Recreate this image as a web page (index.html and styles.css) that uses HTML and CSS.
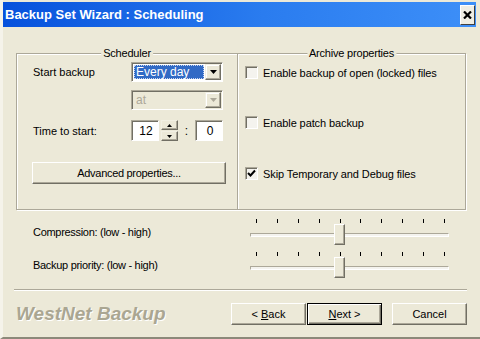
FILE: index.html
```html
<!DOCTYPE html>
<html lang="en">
<head>
    <meta charset="UTF-8">
    <title>Backup Set Wizard : Scheduling</title>
    <link rel="stylesheet" href="styles.css">
</head>
<body>
    <div class="window">
        <div class="titlebar">
            <span class="title">Backup Set Wizard : Scheduling</span>
            <span class="close">
                <svg width="9" height="8" viewBox="0 0 9 8"><path d="M1 0.5 L8 7.5 M8 0.5 L1 7.5" stroke="#000" stroke-width="2.2"/></svg>
            </span>
        </div>

        <div class="groups">
            <div class="group scheduler">
                <span class="legend">Scheduler</span>

                <div class="form-row">
                    <span class="label">Start backup</span>
                    <div class="combo">
                        <span class="combo-text selected">Every day</span>
                        <span class="combo-btn">
                            <svg width="7" height="4" viewBox="0 0 7 4"><path d="M0 0 H7 L3.5 4 Z" fill="#000"/></svg>
                        </span>
                    </div>
                </div>

                <div class="form-row second">
                    <span class="label"></span>
                    <div class="combo disabled">
                        <span class="combo-text">at</span>
                        <span class="combo-btn">
                            <svg width="7" height="4" viewBox="0 0 7 4"><path d="M0 0 H7 L3.5 4 Z" fill="#aca899"/></svg>
                        </span>
                    </div>
                </div>

                <div class="form-row time-row">
                    <span class="label">Time to start:</span>
                    <div class="time">
                        <span class="field">12</span>
                        <span class="spin">
                            <span class="spin-btn"><svg width="5" height="3" viewBox="0 0 5 3"><path d="M0 3 H5 L2.5 0 Z" fill="#000"/></svg></span>
                            <span class="spin-btn"><svg width="5" height="3" viewBox="0 0 5 3"><path d="M0 0 H5 L2.5 3 Z" fill="#000"/></svg></span>
                        </span>
                        <span class="colon">:</span>
                        <span class="field">0</span>
                    </div>
                </div>

                <button class="btn advanced">Advanced properties...</button>
            </div>

            <div class="group archive">
                <span class="legend">Archive properties</span>
                <div class="check">
                    <span class="box"></span>
                    <span>Enable backup of open (locked) files</span>
                </div>
                <div class="check">
                    <span class="box"></span>
                    <span>Enable patch backup</span>
                </div>
                <div class="check">
                    <span class="box">
                        <svg width="9" height="9" viewBox="0 0 9 9"><path d="M1 4 L3.5 6.5 L8 1.5" stroke="#000" stroke-width="2" fill="none"/></svg>
                    </span>
                    <span>Skip Temporary and Debug files</span>
                </div>
            </div>
        </div>

        <div class="slider-row first">
            <span class="slider-label">Compression: (low - high)</span>
            <div class="slider">
                <div class="ticks">
                    <i></i><i></i><i></i><i></i><i></i><i></i><i></i><i></i><i></i><i></i>
                </div>
                <div class="track"></div>
                <span class="thumb"></span>
            </div>
        </div>

        <div class="slider-row">
            <span class="slider-label">Backup priority: (low - high)</span>
            <div class="slider">
                <div class="ticks">
                    <i></i><i></i><i></i><i></i><i></i><i></i><i></i><i></i><i></i><i></i>
                </div>
                <div class="track"></div>
                <span class="thumb"></span>
            </div>
        </div>

        <div class="separator"></div>

        <div class="footer">
            <span class="brand">WestNet Backup</span>
            <button class="btn nav">&lt; <u>B</u>ack</button>
            <button class="btn nav default"><u>N</u>ext &gt;</button>
            <button class="btn nav cancel">Cancel</button>
        </div>
    </div>
</body>
</html>
```

FILE: styles.css
```css
body {
    margin: 0;
    font-family: "Liberation Sans", Arial, sans-serif;
    font-size: 11px;
    color: #000;
    background-color: #ece9d8;
}

.window {
    width: 480px;
    height: 339px;
    box-sizing: border-box;
    background-color: #ece9d8;
    border-left: 3px solid #f5f3ea;
    border-bottom: 2px solid #8c897a;
    display: flex;
    flex-direction: column;
}

/* title bar */
.titlebar {
    height: 25px;
    margin: 2px 4px 0 0;
    padding: 0 1px 0 2px;
    display: flex;
    align-items: center;
    justify-content: space-between;
    background: linear-gradient(to right, #0651dc, #2a7cef 55%, #3d8ff8);
    color: #fff;
    font-weight: bold;
    font-size: 13px;
}

.close {
    width: 15px;
    height: 20px;
    box-sizing: border-box;
    display: flex;
    align-items: center;
    justify-content: center;
    background-color: #efede3;
    border: 1px solid;
    border-color: #fff #404040 #404040 #fff;
}

/* group boxes */
.groups {
    display: flex;
    margin: 26px 0 0 13px;
}

.group {
    position: relative;
    height: 157px;
    box-sizing: border-box;
    border: 1px solid #aca899;
    box-shadow: inset 1px 1px 0 #fff, 1px 1px 0 #fff;
}

.scheduler {
    width: 222px;
    padding: 8px 0 0 16px;
}

.archive {
    width: 228px;
    border-left: none;
    padding: 12px 0 0 7px;
}

.legend {
    position: absolute;
    top: -7px;
    left: 50%;
    transform: translateX(-50%);
    padding: 0 2px;
    line-height: 13px;
    letter-spacing: -0.2px;
    background-color: #ece9d8;
    white-space: nowrap;
}

.form-row {
    display: flex;
    align-items: center;
    height: 20px;
}

.form-row.second {
    margin-top: 8px;
}

.form-row.time-row {
    margin-top: 10px;
    height: 21px;
}

.label {
    width: 98px;
    flex-shrink: 0;
}

/* combo boxes */
.combo {
    width: 92px;
    height: 20px;
    box-sizing: border-box;
    display: flex;
    align-items: stretch;
    padding: 1px;
    background-color: #fff;
    border: 1px solid;
    border-color: #aca899 #fff #fff #aca899;
    box-shadow: inset 1px 1px 0 #716f64;
}

.combo-text {
    flex: 1;
    margin: 1px;
    padding-left: 2px;
    line-height: 14px;
    font-size: 12px;
}

.combo-text.selected {
    background-color: #316ac5;
    color: #fff;
    outline: 1px dotted #c9d6ee;
    outline-offset: -1px;
}

.combo-btn {
    width: 16px;
    box-sizing: border-box;
    display: flex;
    align-items: center;
    justify-content: center;
    background-color: #ece9d8;
    border: 1px solid;
    border-color: #f1efe2 #716f64 #716f64 #f1efe2;
    box-shadow: inset -1px -1px 0 #aca899, inset 1px 1px 0 #fff;
}

.combo.disabled {
    background-color: #ece9d8;
}

.combo.disabled .combo-text {
    color: #aca899;
}

/* time spinner */
.time {
    width: 92px;
    display: flex;
    align-items: center;
}

.field {
    width: 28px;
    height: 21px;
    box-sizing: border-box;
    display: flex;
    align-items: center;
    justify-content: center;
    padding-left: 2px;
    font-size: 12px;
    background-color: #fff;
    border: 1px solid;
    border-color: #aca899 #fff #fff #aca899;
    box-shadow: inset 1px 1px 0 #716f64;
}

.spin {
    width: 17px;
    height: 21px;
    margin-left: 2px;
    display: flex;
    flex-direction: column;
    gap: 1px;
}

.spin-btn {
    flex: 1;
    box-sizing: border-box;
    display: flex;
    align-items: center;
    justify-content: center;
    background-color: #ece9d8;
    border: 1px solid;
    border-color: #f1efe2 #716f64 #716f64 #f1efe2;
    box-shadow: inset -1px -1px 0 #aca899;
}

.colon {
    flex: 1;
    text-align: center;
    font-size: 12px;
}

/* buttons */
.btn {
    font-family: inherit;
    font-size: 11px;
    color: #000;
    background-color: #ece9d8;
    border: 1px solid;
    border-color: #fff #716f64 #716f64 #fff;
    box-shadow: inset -1px -1px 0 #aca899;
    padding: 0;
    height: 22px;
    box-sizing: border-box;
}

.btn.advanced {
    width: 194px;
    margin: 21px 0 0 -1px;
    letter-spacing: -0.3px;
}

/* checkboxes */
.check {
    display: flex;
    align-items: center;
    gap: 5px;
    height: 13px;
    margin-bottom: 37px;
    letter-spacing: -0.1px;
    white-space: nowrap;
}

.check:nth-child(3) {
    margin-bottom: 38px;
}

.box {
    width: 13px;
    height: 13px;
    box-sizing: border-box;
    flex-shrink: 0;
    display: flex;
    align-items: center;
    justify-content: center;
    background-color: #f4f3ee;
    border: 1px solid;
    border-color: #aca899 #fff #fff #aca899;
    box-shadow: inset 1px 1px 0 #716f64;
}

/* sliders */
.slider-row {
    display: flex;
    align-items: center;
    padding-left: 30px;
    margin-top: 7px;
}

.slider-row.first {
    margin-top: 9px;
}

.slider-label {
    width: 217px;
    letter-spacing: -0.3px;
}

.slider {
    position: relative;
    width: 199px;
    height: 26px;
}

.ticks {
    display: flex;
    justify-content: space-between;
    height: 4px;
    padding: 0 4px 0 6px;
}

.ticks i {
    width: 1px;
    height: 4px;
    background-color: #000;
}

.track {
    height: 4px;
    margin-top: 10px;
    box-sizing: border-box;
    background-color: #f4f3ee;
    border: 1px solid;
    border-color: #aca899 #fff #fff #aca899;
}

.thumb {
    position: absolute;
    left: 84px;
    top: 5px;
    width: 11px;
    height: 21px;
    box-sizing: border-box;
    background-color: #ece9d8;
    border: 1px solid;
    border-color: #fff #716f64 #716f64 #fff;
    box-shadow: inset -1px -1px 0 #aca899;
}

/* footer */
.separator {
    height: 1px;
    margin: 11px 13px 0 11px;
    background-color: #aca899;
    border-bottom: 1px solid #fff;
}

.footer {
    display: flex;
    align-items: center;
    margin-top: 12px;
    padding: 0 13px 0 13px;
}

.brand {
    flex: 1;
    font-size: 19px;
    font-weight: bold;
    font-style: italic;
    line-height: 22px;
    color: #aaa692;
    text-shadow: 1px 1px 0 #fff;
}

.btn.nav {
    width: 75px;
}

.btn.nav.default {
    margin-left: 1px;
    border-color: #000;
    box-shadow: inset 1px 1px 0 #fff, inset -1px -1px 0 #716f64, inset -2px -2px 0 #aca899;
}

.btn.nav.cancel {
    margin-left: 10px;
}
```
